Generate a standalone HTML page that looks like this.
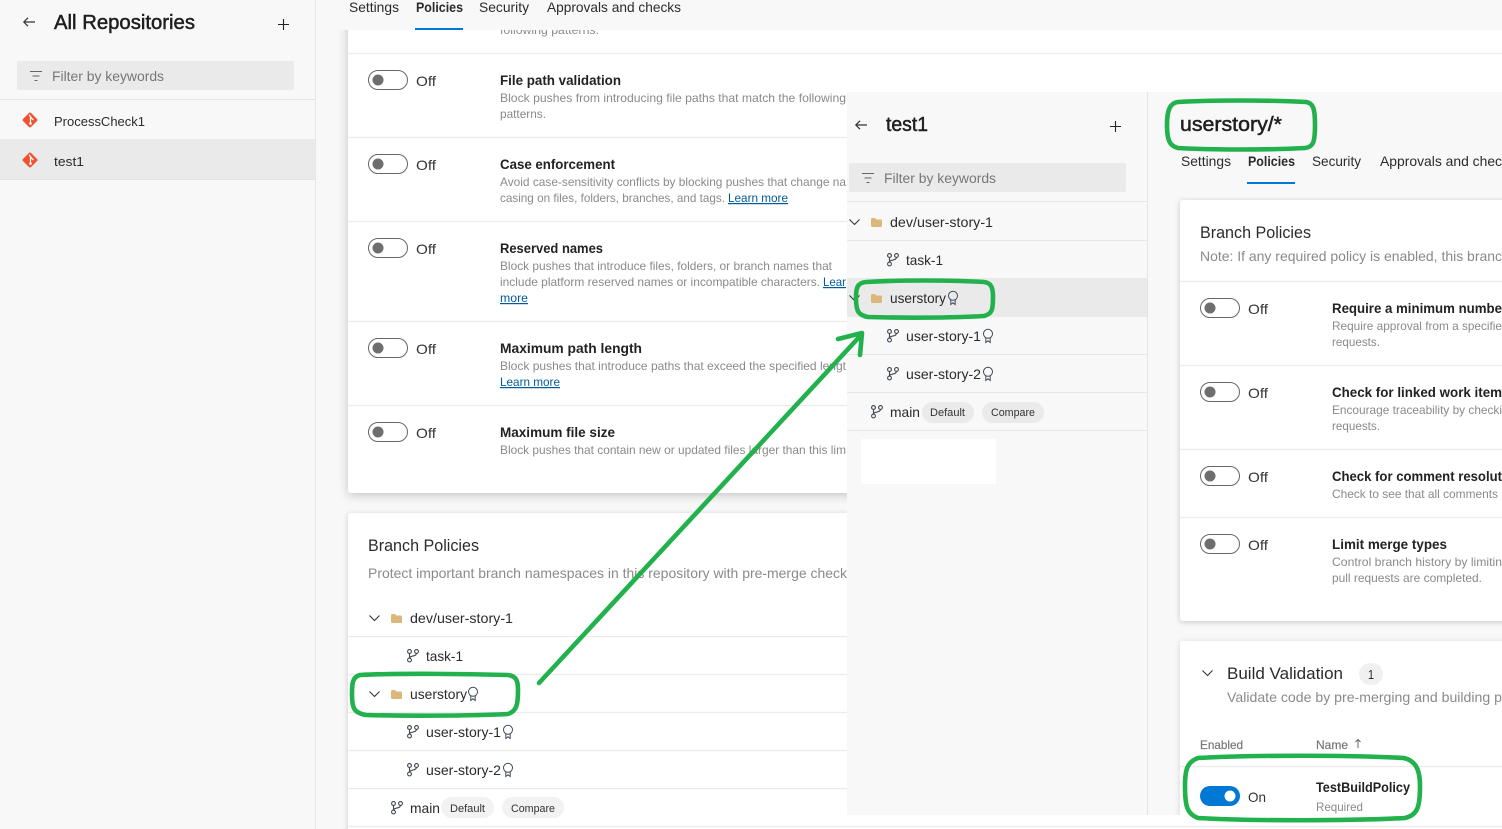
<!DOCTYPE html>
<html lang="en">
<head>
<meta charset="utf-8">
<title>Repository policies</title>
<style>
html,body{margin:0;padding:0;width:1502px;height:829px;overflow:hidden;background:#f8f8f8}
svg{display:block}
text{font-family:"Liberation Sans",sans-serif;white-space:pre}
.t{font-size:14px;fill:#2b2b2b}
.h{font-size:20px;fill:#1f1f1f;stroke:#1f1f1f;stroke-width:.5px}
.s{font-size:13px;fill:#2b2b2b}
.b{font-size:13.5px;fill:#222;font-weight:700}
.d{font-size:12px;fill:#8a8a8a}
.g{font-size:14px;fill:#8a8a8a}
.f{font-size:13.5px;fill:#777}
.l{font-size:12px;fill:#005a9e;text-decoration:underline}
.h2{font-size:17px;fill:#2b2b2b}
.p{font-size:11px;fill:#333}
.o{font-size:14px;fill:#333}
.th{font-size:12px;fill:#777;stroke:#777;stroke-width:.2px}
.ln{stroke:#ebebeb;stroke-width:1.2}
</style>
</head>
<body>
<svg width="1502" height="829" viewBox="0 0 1502 829" xmlns="http://www.w3.org/2000/svg">
<defs>
<symbol id="br" viewBox="0 0 12 14" overflow="visible">
<g fill="none" stroke="#3f4650" stroke-width="1.1"><circle cx="2.5" cy="2.5" r="1.9"/><circle cx="2.5" cy="11" r="1.9"/><circle cx="9.5" cy="2.5" r="1.9"/><path d="M2.5 4.4V9.100M9.500 4.400C9.500 7.500 4 6.500 2.500 8.500"/></g>
</symbol>
<symbol id="rb" viewBox="0 0 10 14" overflow="visible">
<g fill="none" stroke="#3f4a58" stroke-width="1"><circle cx="5" cy="4.800" r="4.500"/><path d="M2.800 8.800V13.500L5 11.800 7.200 13.500V8.800"/></g>
</symbol>
<symbol id="fo" viewBox="0 0 11 9" overflow="visible">
<path d="M0 1.200Q0 0 1.200 0H4L5.200 1.500H9.800Q11 1.500 11 2.700V7.800Q11 9 9.800 9H1.200Q0 9 0 7.800Z" fill="#dcb67a"/>
</symbol>
<symbol id="ch" viewBox="0 0 11 6" overflow="visible">
<path d="M.5.500 5.500 5.500 10.500.500" fill="none" stroke="#333" stroke-width="1.100"/>
</symbol>
<symbol id="ff" viewBox="0 0 12 10" overflow="visible">
<path d="M0 .5H12M2.500 5H9.500M4.500 9.500H7.500" fill="none" stroke="#666" stroke-width="1.100"/>
</symbol>
<symbol id="ba" viewBox="0 0 12 10" overflow="visible">
<path d="M12 5H.8M5 .8.800 5 5 9.200" fill="none" stroke="#333" stroke-width="1.200"/>
</symbol>
<symbol id="pl" viewBox="0 0 11 11" overflow="visible">
<path d="M5.500 0V11M0 5.500H11" fill="none" stroke="#222" stroke-width="1.100"/>
</symbol>
<symbol id="tg" viewBox="0 0 40 20" overflow="visible">
<rect x=".5" y=".5" width="39" height="19" rx="9.500" fill="#fff" stroke="#666"/>
<circle cx="10" cy="10" r="5.500" fill="#6e6e6e"/>
</symbol>
<symbol id="git" viewBox="0 0 16 16" overflow="visible">
<rect x="2.300" y="2.300" width="11.400" height="11.400" rx="1.500" transform="rotate(45 8 8)" fill="#f05133"/>
<path d="M7 2.800 9 5M8.500 5V12M8.800 5.500 11.500 8" stroke="#fff" stroke-width="1.300" fill="none"/>
<circle cx="8.500" cy="11.500" r="1.300" fill="#fff"/>
</symbol>
</defs>

<rect width="1502" height="829" fill="#f8f8f8"/>

<!-- main page cards -->
<rect x="348" y="10" width="1154" height="483" rx="3" fill="#fff" style="filter:drop-shadow(0 2px 5px rgba(0,0,0,.22))"/>
<rect x="348" y="513" width="1154" height="330" rx="3" fill="#fff" style="filter:drop-shadow(0 1px 3px rgba(0,0,0,.18))"/>

<text class="d" x="500" y="34" textLength="99" lengthAdjust="spacingAndGlyphs">following patterns.</text>
<rect x="316" y="0" width="1186" height="30" fill="#f8f8f8"/>

<text class="t" x="349" y="12" textLength="50" lengthAdjust="spacingAndGlyphs">Settings</text>
<text class="t" x="416" y="12" textLength="47" lengthAdjust="spacingAndGlyphs" font-weight="700">Policies</text>
<text class="t" x="479" y="12" textLength="50" lengthAdjust="spacingAndGlyphs">Security</text>
<text class="t" x="547" y="12" textLength="134" lengthAdjust="spacingAndGlyphs">Approvals and checks</text>
<rect x="415" y="28" width="48" height="2" fill="#0078d4"/>

<path class="ln" d="M348 53.500H1502M348 137.500H847M348 221.500H847M348 321.500H847M348 405.500H847"/>

<use href="#tg" x="368" y="70" width="40" height="20"/>
<use href="#tg" x="368" y="154" width="40" height="20"/>
<use href="#tg" x="368" y="238" width="40" height="20"/>
<use href="#tg" x="368" y="338" width="40" height="20"/>
<use href="#tg" x="368" y="422" width="40" height="20"/>
<text class="o" x="416" y="86" textLength="20" lengthAdjust="spacingAndGlyphs">Off</text>
<text class="o" x="416" y="170" textLength="20" lengthAdjust="spacingAndGlyphs">Off</text>
<text class="o" x="416" y="254" textLength="20" lengthAdjust="spacingAndGlyphs">Off</text>
<text class="o" x="416" y="354" textLength="20" lengthAdjust="spacingAndGlyphs">Off</text>
<text class="o" x="416" y="438" textLength="20" lengthAdjust="spacingAndGlyphs">Off</text>

<text class="b" x="500" y="85" textLength="121" lengthAdjust="spacingAndGlyphs">File path validation</text>
<text class="d" x="500" y="102" textLength="346" lengthAdjust="spacingAndGlyphs">Block pushes from introducing file paths that match the following</text>
<text class="d" x="500" y="118" textLength="46" lengthAdjust="spacingAndGlyphs">patterns.</text>

<text class="b" x="500" y="169" textLength="115" lengthAdjust="spacingAndGlyphs">Case enforcement</text>
<text class="d" x="500" y="186" textLength="346" lengthAdjust="spacingAndGlyphs">Avoid case-sensitivity conflicts by blocking pushes that change na</text>
<text class="d" x="500" y="202" textLength="225" lengthAdjust="spacingAndGlyphs">casing on files, folders, branches, and tags.</text>
<text class="l" x="728" y="202" textLength="60" lengthAdjust="spacingAndGlyphs">Learn more</text>

<text class="b" x="500" y="253" textLength="103" lengthAdjust="spacingAndGlyphs">Reserved names</text>
<text class="d" x="500" y="270" textLength="332" lengthAdjust="spacingAndGlyphs">Block pushes that introduce files, folders, or branch names that</text>
<text class="d" x="500" y="286" textLength="320" lengthAdjust="spacingAndGlyphs">include platform reserved names or incompatible characters.</text>
<text class="l" x="823" y="286" textLength="23" lengthAdjust="spacingAndGlyphs">Lear</text>
<text class="l" x="500" y="302" textLength="28" lengthAdjust="spacingAndGlyphs">more</text>

<text class="b" x="500" y="353" textLength="142" lengthAdjust="spacingAndGlyphs">Maximum path length</text>
<text class="d" x="500" y="370" textLength="346" lengthAdjust="spacingAndGlyphs">Block pushes that introduce paths that exceed the specified lengt</text>
<text class="l" x="500" y="386" textLength="60" lengthAdjust="spacingAndGlyphs">Learn more</text>

<text class="b" x="500" y="437" textLength="115" lengthAdjust="spacingAndGlyphs">Maximum file size</text>
<text class="d" x="500" y="454" textLength="346" lengthAdjust="spacingAndGlyphs">Block pushes that contain new or updated files larger than this lim</text>

<text class="h2" x="368" y="551" textLength="111" lengthAdjust="spacingAndGlyphs">Branch Policies</text>
<text class="g" x="368" y="578" textLength="479" lengthAdjust="spacingAndGlyphs">Protect important branch namespaces in this repository with pre-merge check</text>

<path class="ln" d="M348 636.500H847M348 674.500H847M348 712.500H847M348 750.500H847M348 788.500H847M348 826.500H1502"/>

<use href="#ch" x="369" y="615" width="11" height="6"/>
<use href="#fo" x="391" y="614" width="11" height="9"/>
<text class="t" x="410" y="623" textLength="103" lengthAdjust="spacingAndGlyphs">dev/user-story-1</text>
<use href="#br" x="407" y="649" width="12" height="14"/>
<text class="t" x="426" y="661" textLength="37" lengthAdjust="spacingAndGlyphs">task-1</text>
<use href="#ch" x="369" y="691" width="11" height="6"/>
<use href="#fo" x="391" y="690" width="11" height="9"/>
<text class="t" x="410" y="699" textLength="57" lengthAdjust="spacingAndGlyphs">userstory</text>
<use href="#rb" x="468" y="687" width="10" height="14"/>
<use href="#br" x="407" y="725" width="12" height="14"/>
<text class="t" x="426" y="737" textLength="75" lengthAdjust="spacingAndGlyphs">user-story-1</text>
<use href="#rb" x="503" y="725" width="10" height="14"/>
<use href="#br" x="407" y="763" width="12" height="14"/>
<text class="t" x="426" y="775" textLength="75" lengthAdjust="spacingAndGlyphs">user-story-2</text>
<use href="#rb" x="503" y="763" width="10" height="14"/>
<use href="#br" x="391" y="801" width="12" height="14"/>
<text class="t" x="410" y="813" textLength="30" lengthAdjust="spacingAndGlyphs">main</text>
<rect x="441" y="797" width="53" height="21" rx="10.500" fill="#f2f2f2"/>
<text class="p" x="450" y="812" textLength="35" lengthAdjust="spacingAndGlyphs">Default</text>
<rect x="502" y="797" width="62" height="21" rx="10.500" fill="#f2f2f2"/>
<text class="p" x="511" y="812" textLength="44" lengthAdjust="spacingAndGlyphs">Compare</text>

<!-- sidebar -->
<rect x="0" y="0" width="315" height="829" fill="#f8f8f8"/>
<rect x="315" y="0" width="1" height="829" fill="#e8e8e8"/>
<use href="#ba" x="23" y="17" width="12" height="10"/>
<text class="h" x="54" y="29" textLength="141" lengthAdjust="spacingAndGlyphs">All Repositories</text>
<use href="#pl" x="278" y="19" width="11" height="11"/>
<rect x="17" y="61" width="277" height="29" rx="2" fill="#eaeaea"/>
<use href="#ff" x="30" y="71" width="12" height="10"/>
<text class="f" x="52" y="81" textLength="112" lengthAdjust="spacingAndGlyphs">Filter by keywords</text>
<rect x="0" y="139" width="315" height="40" fill="#eaeaea"/>
<path d="M0 99.500H315M0 179.500H315" stroke="#e3e3e3"/>
<use href="#git" x="22" y="112" width="16" height="16"/>
<use href="#git" x="22" y="152" width="16" height="16"/>
<text class="s" x="54" y="126" textLength="91" lengthAdjust="spacingAndGlyphs">ProcessCheck1</text>
<text class="s" x="54" y="166" textLength="30" lengthAdjust="spacingAndGlyphs">test1</text>

<!-- overlay panel -->
<rect x="847" y="92" width="655" height="723" fill="#f8f8f8"/>
<rect x="1147" y="92" width="1" height="723" fill="#e4e4e4"/>
<use href="#ba" x="855" y="120" width="12" height="10"/>
<text class="h" x="886" y="131" textLength="42" lengthAdjust="spacingAndGlyphs">test1</text>
<use href="#pl" x="1110" y="121" width="11" height="11"/>
<rect x="849" y="163" width="277" height="29" rx="2" fill="#eaeaea"/>
<use href="#ff" x="862" y="173" width="12" height="10"/>
<text class="f" x="884" y="183" textLength="112" lengthAdjust="spacingAndGlyphs">Filter by keywords</text>
<rect x="847" y="278" width="300" height="39" fill="#eaeaea"/>
<path d="M847 201.500H1147M847 240.500H1147M847 354.500H1147M847 392.500H1147M847 430.500H1147" stroke="#e6e6e6"/>
<use href="#ch" x="849" y="219" width="11" height="6"/>
<use href="#fo" x="871" y="218" width="11" height="9"/>
<text class="t" x="890" y="227" textLength="103" lengthAdjust="spacingAndGlyphs">dev/user-story-1</text>
<use href="#br" x="887" y="253" width="12" height="14"/>
<text class="t" x="906" y="265" textLength="37" lengthAdjust="spacingAndGlyphs">task-1</text>
<use href="#ch" x="849" y="295" width="11" height="6"/>
<use href="#fo" x="871" y="294" width="11" height="9"/>
<text class="t" x="890" y="303" textLength="56" lengthAdjust="spacingAndGlyphs">userstory</text>
<use href="#rb" x="948" y="291" width="10" height="14"/>
<use href="#br" x="887" y="329" width="12" height="14"/>
<text class="t" x="906" y="341" textLength="75" lengthAdjust="spacingAndGlyphs">user-story-1</text>
<use href="#rb" x="983" y="329" width="10" height="14"/>
<use href="#br" x="887" y="367" width="12" height="14"/>
<text class="t" x="906" y="379" textLength="75" lengthAdjust="spacingAndGlyphs">user-story-2</text>
<use href="#rb" x="983" y="367" width="10" height="14"/>
<use href="#br" x="871" y="405" width="12" height="14"/>
<text class="t" x="890" y="417" textLength="30" lengthAdjust="spacingAndGlyphs">main</text>
<rect x="922" y="402" width="52" height="21" rx="10.500" fill="#eaeaea"/>
<text class="p" x="930" y="416" textLength="35" lengthAdjust="spacingAndGlyphs">Default</text>
<rect x="982" y="402" width="62" height="21" rx="10.500" fill="#eaeaea"/>
<text class="p" x="991" y="416" textLength="44" lengthAdjust="spacingAndGlyphs">Compare</text>
<rect x="861" y="439" width="135" height="45" fill="#fff"/>

<!-- right column -->
<text class="h" x="1180" y="131" textLength="102" lengthAdjust="spacingAndGlyphs">userstory/*</text>
<text class="t" x="1181" y="166" textLength="50" lengthAdjust="spacingAndGlyphs">Settings</text>
<text class="t" x="1248" y="166" textLength="47" lengthAdjust="spacingAndGlyphs" font-weight="700">Policies</text>
<text class="t" x="1312" y="166" textLength="49" lengthAdjust="spacingAndGlyphs">Security</text>
<text class="t" x="1380" y="166" textLength="122" lengthAdjust="spacingAndGlyphs">Approvals and chec</text>
<rect x="1247" y="182" width="48" height="2" fill="#0078d4"/>

<rect x="1180" y="200" width="340" height="421" rx="3" fill="#fff" style="filter:drop-shadow(0 1px 3px rgba(0,0,0,.2))"/>
<text class="h2" x="1200" y="238" textLength="111" lengthAdjust="spacingAndGlyphs">Branch Policies</text>
<text class="g" x="1200" y="261" textLength="302" lengthAdjust="spacingAndGlyphs">Note: If any required policy is enabled, this branc</text>
<path class="ln" d="M1180 281.500H1502M1180 365.500H1502M1180 449.500H1502M1180 517.500H1502"/>

<use href="#tg" x="1200" y="298" width="40" height="20"/>
<use href="#tg" x="1200" y="382" width="40" height="20"/>
<use href="#tg" x="1200" y="466" width="40" height="20"/>
<use href="#tg" x="1200" y="534" width="40" height="20"/>
<text class="o" x="1248" y="314" textLength="20" lengthAdjust="spacingAndGlyphs">Off</text>
<text class="o" x="1248" y="398" textLength="20" lengthAdjust="spacingAndGlyphs">Off</text>
<text class="o" x="1248" y="482" textLength="20" lengthAdjust="spacingAndGlyphs">Off</text>
<text class="o" x="1248" y="550" textLength="20" lengthAdjust="spacingAndGlyphs">Off</text>

<text class="b" x="1332" y="313" textLength="170" lengthAdjust="spacingAndGlyphs">Require a minimum numbe</text>
<text class="d" x="1332" y="330" textLength="170" lengthAdjust="spacingAndGlyphs">Require approval from a specifie</text>
<text class="d" x="1332" y="346" textLength="48" lengthAdjust="spacingAndGlyphs">requests.</text>
<text class="b" x="1332" y="397" textLength="170" lengthAdjust="spacingAndGlyphs">Check for linked work item</text>
<text class="d" x="1332" y="414" textLength="170" lengthAdjust="spacingAndGlyphs">Encourage traceability by checki</text>
<text class="d" x="1332" y="430" textLength="48" lengthAdjust="spacingAndGlyphs">requests.</text>
<text class="b" x="1332" y="481" textLength="170" lengthAdjust="spacingAndGlyphs">Check for comment resolut</text>
<text class="d" x="1332" y="498" textLength="166" lengthAdjust="spacingAndGlyphs">Check to see that all comments</text>
<text class="b" x="1332" y="549" textLength="115" lengthAdjust="spacingAndGlyphs">Limit merge types</text>
<text class="d" x="1332" y="566" textLength="170" lengthAdjust="spacingAndGlyphs">Control branch history by limitin</text>
<text class="d" x="1332" y="582" textLength="150" lengthAdjust="spacingAndGlyphs">pull requests are completed.</text>

<rect x="1180" y="641" width="340" height="200" rx="3" fill="#fff" style="filter:drop-shadow(0 1px 3px rgba(0,0,0,.15))"/>
<use href="#ch" x="1202" y="670" width="11" height="6"/>
<text class="h2" x="1227" y="679" textLength="116" lengthAdjust="spacingAndGlyphs">Build Validation</text>
<rect x="1359" y="663" width="24" height="22" rx="11" fill="#f0f0f0"/>
<text class="s" x="1368" y="679" textLength="6" lengthAdjust="spacingAndGlyphs">1</text>
<text class="g" x="1227" y="702" textLength="275" lengthAdjust="spacingAndGlyphs">Validate code by pre-merging and building p</text>
<text class="th" x="1200" y="749" textLength="43" lengthAdjust="spacingAndGlyphs">Enabled</text>
<text class="th" x="1316" y="749" textLength="32" lengthAdjust="spacingAndGlyphs">Name</text>
<path d="M1358 739.800V748M1355.500 742 1358 739.500 1360.500 742" fill="none" stroke="#666" stroke-width="1"/>
<path class="ln" d="M1180 766.500H1502"/>
<rect x="1200" y="786" width="40" height="20" rx="10" fill="#0078d4"/>
<circle cx="1230" cy="796" r="5.500" fill="#fff"/>
<text class="o" x="1248" y="802" textLength="18" lengthAdjust="spacingAndGlyphs">On</text>
<text class="b" x="1316" y="792" textLength="94" lengthAdjust="spacingAndGlyphs">TestBuildPolicy</text>
<text class="d" x="1316" y="811" textLength="47" lengthAdjust="spacingAndGlyphs">Required</text>

<!-- bottom strip under overlay -->
<rect x="847" y="815" width="655" height="14" fill="#fff"/>
<path class="ln" d="M847 826.500H1502"/>

<!-- green annotations -->
<g fill="none" stroke="#22b14c" stroke-width="4.600" stroke-linecap="round" stroke-linejoin="round">
<path d="M360 675C400 673 470 674 508 675C516 676 518 680 518 690C518 704 517 711 508 714C470 716 400 716 366 715C354 713 352 708 352 695C352 684 352 677 360 675Z"/>
<path d="M866 282C900 280 950 280 984 282C991 283 993 287 993 297C993 310 992 314 984 316C950 318 900 318 868 317C858 315 856 311 856 298C856 288 857 283 866 282Z"/>
<path d="M1178 102C1210 100 1270 100 1306 102C1313 103 1315 108 1315 125C1315 143 1313 147 1305 148C1270 150 1210 150 1178 148C1170 146 1167 141 1167 125C1167 110 1170 103 1178 102Z"/>
<path d="M1198 758C1250 755 1350 755 1404 758C1416 761 1420 770 1420 786C1420 806 1418 815 1405 818C1350 821 1250 821 1198 818C1187 814 1185 806 1185 786C1185 770 1187 762 1198 758Z"/>
<path d="M539 683 862 334M838 339 862 333 860 355"/>
</g>
</svg>
</body>
</html>
